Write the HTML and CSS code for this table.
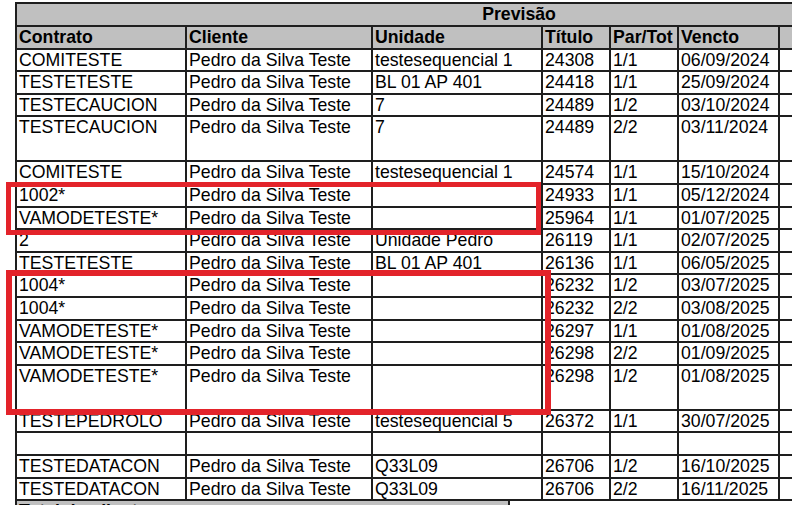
FILE: index.html
```html
<!DOCTYPE html>
<html lang="pt-BR">
<head>
<meta charset="utf-8">
<title>Previsão</title>
<link rel="stylesheet" href="styles.css">
</head>
<body>
<div class="page">
  <table class="report">
    <colgroup>
      <col class="c-contrato">
      <col class="c-cliente">
      <col class="c-unidade">
      <col class="c-titulo">
      <col class="c-partot">
      <col class="c-vencto">
      <col class="c-extra">
    </colgroup>
    <thead>
      <tr class="band"><th colspan="7">Previsão</th></tr>
      <tr class="heads">
        <th>Contrato</th><th>Cliente</th><th>Unidade</th><th>Título</th><th>Par/Tot</th><th>Vencto</th><th></th>
      </tr>
    </thead>
    <tbody>
      <tr><td>COMITESTE</td><td>Pedro da Silva Teste</td><td>testesequencial 1</td><td>24308</td><td>1/1</td><td>06/09/2024</td><td></td></tr>
      <tr><td>TESTETESTE</td><td>Pedro da Silva Teste</td><td>BL 01 AP 401</td><td>24418</td><td>1/1</td><td>25/09/2024</td><td></td></tr>
      <tr><td>TESTECAUCION</td><td>Pedro da Silva Teste</td><td>7</td><td>24489</td><td>1/2</td><td>03/10/2024</td><td></td></tr>
      <tr class="tall"><td>TESTECAUCION</td><td>Pedro da Silva Teste</td><td>7</td><td>24489</td><td>2/2</td><td>03/11/2024</td><td></td></tr>
      <tr><td>COMITESTE</td><td>Pedro da Silva Teste</td><td>testesequencial 1</td><td>24574</td><td>1/1</td><td>15/10/2024</td><td></td></tr>
      <tr><td>1002*</td><td>Pedro da Silva Teste</td><td></td><td>24933</td><td>1/1</td><td>05/12/2024</td><td></td></tr>
      <tr><td>VAMODETESTE*</td><td>Pedro da Silva Teste</td><td></td><td>25964</td><td>1/1</td><td>01/07/2025</td><td></td></tr>
      <tr><td>2</td><td>Pedro da Silva Teste</td><td>Unidade Pedro</td><td>26119</td><td>1/1</td><td>02/07/2025</td><td></td></tr>
      <tr><td>TESTETESTE</td><td>Pedro da Silva Teste</td><td>BL 01 AP 401</td><td>26136</td><td>1/1</td><td>06/05/2025</td><td></td></tr>
      <tr><td>1004*</td><td>Pedro da Silva Teste</td><td></td><td>26232</td><td>1/2</td><td>03/07/2025</td><td></td></tr>
      <tr><td>1004*</td><td>Pedro da Silva Teste</td><td></td><td>26232</td><td>2/2</td><td>03/08/2025</td><td></td></tr>
      <tr><td>VAMODETESTE*</td><td>Pedro da Silva Teste</td><td></td><td>26297</td><td>1/1</td><td>01/08/2025</td><td></td></tr>
      <tr><td>VAMODETESTE*</td><td>Pedro da Silva Teste</td><td></td><td>26298</td><td>2/2</td><td>01/09/2025</td><td></td></tr>
      <tr class="tall"><td>VAMODETESTE*</td><td>Pedro da Silva Teste</td><td></td><td>26298</td><td>1/2</td><td>01/08/2025</td><td></td></tr>
      <tr><td>TESTEPEDROLO</td><td>Pedro da Silva Teste</td><td>testesequencial 5</td><td>26372</td><td>1/1</td><td>30/07/2025</td><td></td></tr>
      <tr><td></td><td></td><td></td><td></td><td></td><td></td><td></td></tr>
      <tr><td>TESTEDATACON</td><td>Pedro da Silva Teste</td><td>Q33L09</td><td>26706</td><td>1/2</td><td>16/10/2025</td><td></td></tr>
      <tr><td>TESTEDATACON</td><td>Pedro da Silva Teste</td><td>Q33L09</td><td>26706</td><td>2/2</td><td>16/11/2025</td><td></td></tr>
      <tr class="foot"><td colspan="7"><div class="total"><span>Total do cliente</span></div></td></tr>
    </tbody>
  </table>
  <div class="mark mark-one"></div>
  <div class="mark mark-two"></div>
</div>
</body>
</html>
```

FILE: styles.css
```css
html, body {
  margin: 0;
  padding: 0;
  background: #ffffff;
  overflow: hidden;
}

.page {
  position: relative;
  width: 792px;
  height: 505px;
  overflow: hidden;
  padding: 2px 0 0 15px;
  box-sizing: border-box;
}

.report {
  border-collapse: collapse;
  table-layout: fixed;
  width: 1006px;
  font-family: "Liberation Sans", Arial, sans-serif;
  font-size: 17.7px;
  color: #000;
}

.c-contrato { width: 170px; }
.c-cliente { width: 186px; }
.c-unidade { width: 170px; }
.c-titulo { width: 68px; }
.c-partot { width: 68px; }
.c-vencto { width: 101px; }
.c-extra { width: 243px; }

.report th,
.report td {
  border: 2px solid #1e1e1e;
  padding: 0 0 0 2px;
  height: 20.6px;
  line-height: 20.6px;
  text-align: left;
  vertical-align: top;
  white-space: nowrap;
  overflow: hidden;
}

.report th {
  background: #c0c0c0;
  font-weight: bold;
}

.band th {
  text-align: center;
  height: 20px;
  line-height: 21px;
  padding: 0;
}

.tall td {
  height: 43px;
}

.foot td {
  padding: 0;
}

.total {
  width: 489px;
  height: 22px;
  background: #c0c0c0;
  border-right: 2px solid #1e1e1e;
  padding-left: 2px;
  font-weight: bold;
}

.mark {
  position: absolute;
  box-sizing: border-box;
  border-style: solid;
  border-color: #e3232a;
}

.mark-one {
  left: 6px;
  top: 182px;
  width: 535px;
  height: 53px;
  border-width: 5px;
}

.mark-two {
  left: 6px;
  top: 270px;
  width: 545px;
  height: 145px;
  border-width: 6px;
}
```
